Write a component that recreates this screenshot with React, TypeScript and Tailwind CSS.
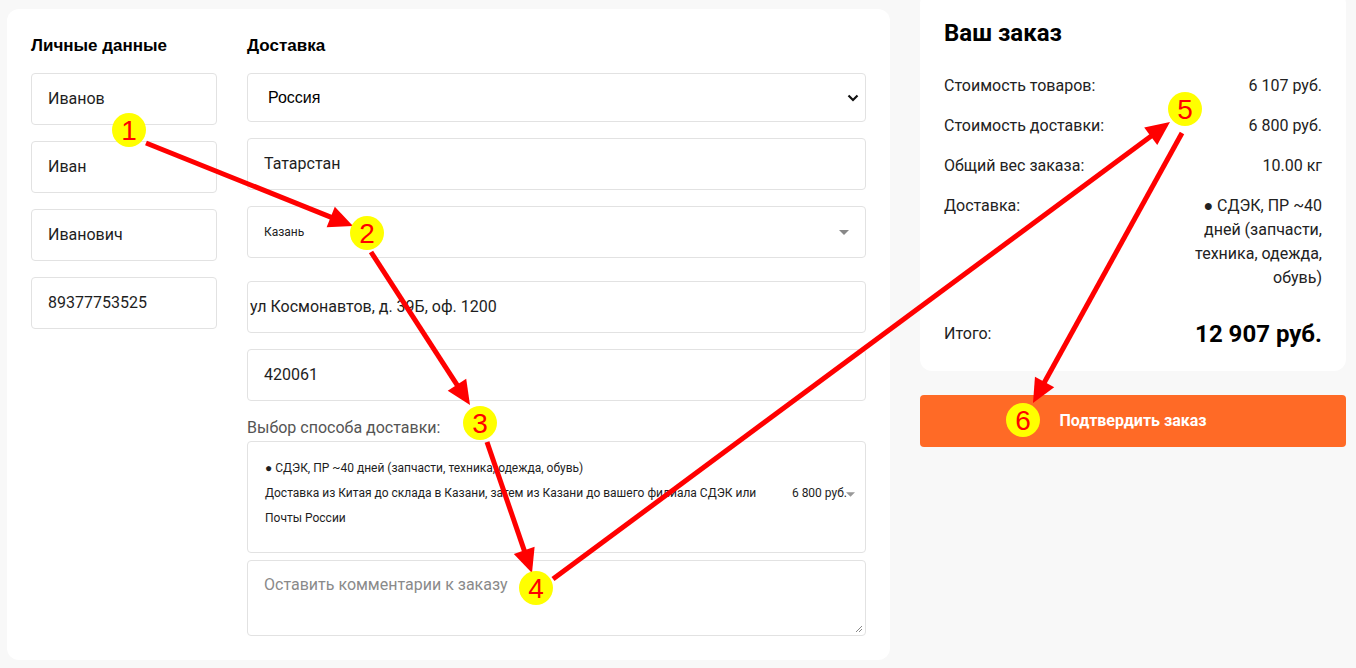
import React from "react";

type Pt = [number, number];

function Arrow({ from, to }: { from: Pt; to: Pt }) {
  const dx = to[0] - from[0];
  const dy = to[1] - from[1];
  const len = Math.hypot(dx, dy);
  const ux = dx / len;
  const uy = dy / len;
  const L = 24;
  const W = 11;
  const bx = to[0] - ux * L;
  const by = to[1] - uy * L;
  const p1 = `${to[0]},${to[1]}`;
  const p2 = `${bx - uy * W},${by + ux * W}`;
  const p3 = `${bx + uy * W},${by - ux * W}`;
  const ex = to[0] - ux * (L - 4);
  const ey = to[1] - uy * (L - 4);
  return (
    <g>
      <line x1={from[0]} y1={from[1]} x2={ex} y2={ey} stroke="#ff0000" strokeWidth={5} />
      <polygon points={`${p1} ${p2} ${p3}`} fill="#ff0000" />
    </g>
  );
}

function Badge({ x, y, n }: { x: number; y: number; n: string }) {
  return (
    <g>
      <ellipse cx={x} cy={y} rx={17} ry={17} fill="#ffff00" />
      <text
        x={x}
        y={y + 10}
        textAnchor="middle"
        fontSize="28"
        fill="#ff0000"
        fontFamily="'Liberation Sans', Arial, sans-serif"
      >
        {n}
      </text>
    </g>
  );
}

const boxCls = "border border-[#e2e2e2] rounded-[4px] bg-white flex items-center";

export default function App() {
  return (
    <div
      className="relative w-[1356px] h-[668px] overflow-hidden bg-[#f8f8f8] flex items-start"
      style={{ fontFamily: "Roboto, 'Noto Sans', sans-serif" }}
    >
      {/* Left card */}
      <div className="ml-[7px] mt-[9px] w-[883px] h-[651px] bg-white rounded-[12px] px-6 pt-[25px] flex gap-[30px]">
        {/* Personal data */}
        <div className="w-[186px] flex flex-col">
          <div className="h-6 leading-6 text-[17px] font-bold text-black font-['Liberation_Sans',Arial,sans-serif] mb-[15px]">
            Личные данные
          </div>
          <div className="flex flex-col gap-4 text-[16px] text-[#1e1e1e]">
            <div className={`${boxCls} h-[52px] pl-4`}>Иванов</div>
            <div className={`${boxCls} h-[52px] pl-4`}>Иван</div>
            <div className={`${boxCls} h-[52px] pl-4`}>Иванович</div>
            <div className={`${boxCls} h-[52px] pl-4`}>89377753525</div>
          </div>
        </div>

        {/* Delivery */}
        <div className="w-[619px] flex flex-col text-[16px] text-[#1e1e1e]">
          <div className="h-6 leading-6 text-[17px] font-bold text-black font-['Liberation_Sans',Arial,sans-serif] mb-[15px]">
            Доставка
          </div>
          <div className={`${boxCls} h-[49px] pl-5 pr-[4px] justify-between font-['Liberation_Sans',Arial,sans-serif] text-black`}>
            <span>Россия</span>
            <svg width="12" height="8" viewBox="0 0 12 8" className="mr-[2px]">
              <path d="M1.5 1.5 L6 6 L10.5 1.5" fill="none" stroke="#111" strokeWidth="2.2" />
            </svg>
          </div>
          <div className={`${boxCls} h-[52px] mt-4 pl-4`}>Татарстан</div>
          <div className={`${boxCls} h-[52px] mt-4 pl-4 pr-4 justify-between`}>
            <span className="text-[12px] text-[#222]">Казань</span>
            <svg width="10" height="5" viewBox="0 0 10 5">
              <path d="M0 0 L10 0 L5 5 Z" fill="#888" />
            </svg>
          </div>
          <div className={`${boxCls} h-[52px] mt-[23px] pl-[2px]`}>ул Космонавтов, д. 39Б, оф. 1200</div>
          <div className={`${boxCls} h-[52px] mt-4 pl-4`}>420061</div>
          <div className="mt-[15px] mb-px h-6 leading-6 text-[#555]">Выбор способа доставки:</div>
          <div className="h-[112px] border border-[#e2e2e2] rounded-[4px] pl-[17px] pr-4 pt-[14px] text-[12px] leading-[25px] text-[#1e1e1e]">
            <div>● СДЭК, ПР ~40 дней (запчасти, техника, одежда, обувь)</div>
            <div className="flex">
              <div className="w-[512px]">
                Доставка из Китая до склада в Казани, затем из Казани до вашего филиала СДЭК или Почты России
              </div>
              <div className="ml-auto relative pr-[2px]">
                6 800 руб.
                <svg width="9" height="5" viewBox="0 0 10 5" className="absolute right-[-6px] top-[11px]">
                  <path d="M0 0 L10 0 L5 5 Z" fill="#999" />
                </svg>
              </div>
            </div>
          </div>
          <div className="relative mt-[7px] h-[76px] border border-[#e2e2e2] rounded-[4px] pl-4 pt-[12px] leading-6 text-[#8a8a8a]">
            Оставить комментарии к заказу
            <svg width="8" height="8" viewBox="0 0 8 8" className="absolute right-[2px] bottom-[2px]">
              <path d="M7 1 L1 7 M7 4 L4 7" stroke="#888" strokeWidth="1" />
            </svg>
          </div>
        </div>
      </div>

      {/* Right column */}
      <div className="ml-[30px] w-[426px] flex flex-col">
        <div className="-mt-[8px] bg-white rounded-[12px] px-6 pt-[26px] pb-[21px] text-[16px] text-[#222]">
          <div className="text-[24px] leading-[30px] font-bold text-black">Ваш заказ</div>
          <div className="mt-[26px] flex flex-col gap-4 leading-6">
            <div className="flex justify-between">
              <span>Стоимость товаров:</span>
              <span>6 107 руб.</span>
            </div>
            <div className="flex justify-between">
              <span>Стоимость доставки:</span>
              <span>6 800 руб.</span>
            </div>
            <div className="flex justify-between">
              <span>Общий вес заказа:</span>
              <span>10.00 кг</span>
            </div>
            <div className="flex justify-between">
              <span>Доставка:</span>
              <span className="w-[132px] text-right">● СДЭК, ПР ~40 дней (запчасти, техника, одежда, обувь)</span>
            </div>
          </div>
          <div className="mt-[28px] flex justify-between items-center h-8">
            <span>Итого:</span>
            <span className="text-[24px] font-bold text-black">12 907 руб.</span>
          </div>
        </div>
        <button className="mt-[24px] h-[52px] rounded-[4px] bg-[#ff6a26] text-white font-bold text-[16px]">
          Подтвердить заказ
        </button>
      </div>

      {/* Annotations overlay */}
      <svg className="absolute inset-0 pointer-events-none" width="1356" height="668">
        <Arrow from={[146, 143]} to={[353, 226]} />
        <Arrow from={[371, 252]} to={[470, 405]} />
        <Arrow from={[487, 442]} to={[532, 573]} />
        <Arrow from={[553, 579]} to={[1170, 122]} />
        <Arrow from={[1182, 133]} to={[1033, 403]} />
        <Badge x={129} y={130} n="1" />
        <Badge x={367} y={233} n="2" />
        <Badge x={480} y={423} n="3" />
        <Badge x={536} y={588} n="4" />
        <Badge x={1185} y={109} n="5" />
        <Badge x={1023} y={420} n="6" />
      </svg>
    </div>
  );
}
